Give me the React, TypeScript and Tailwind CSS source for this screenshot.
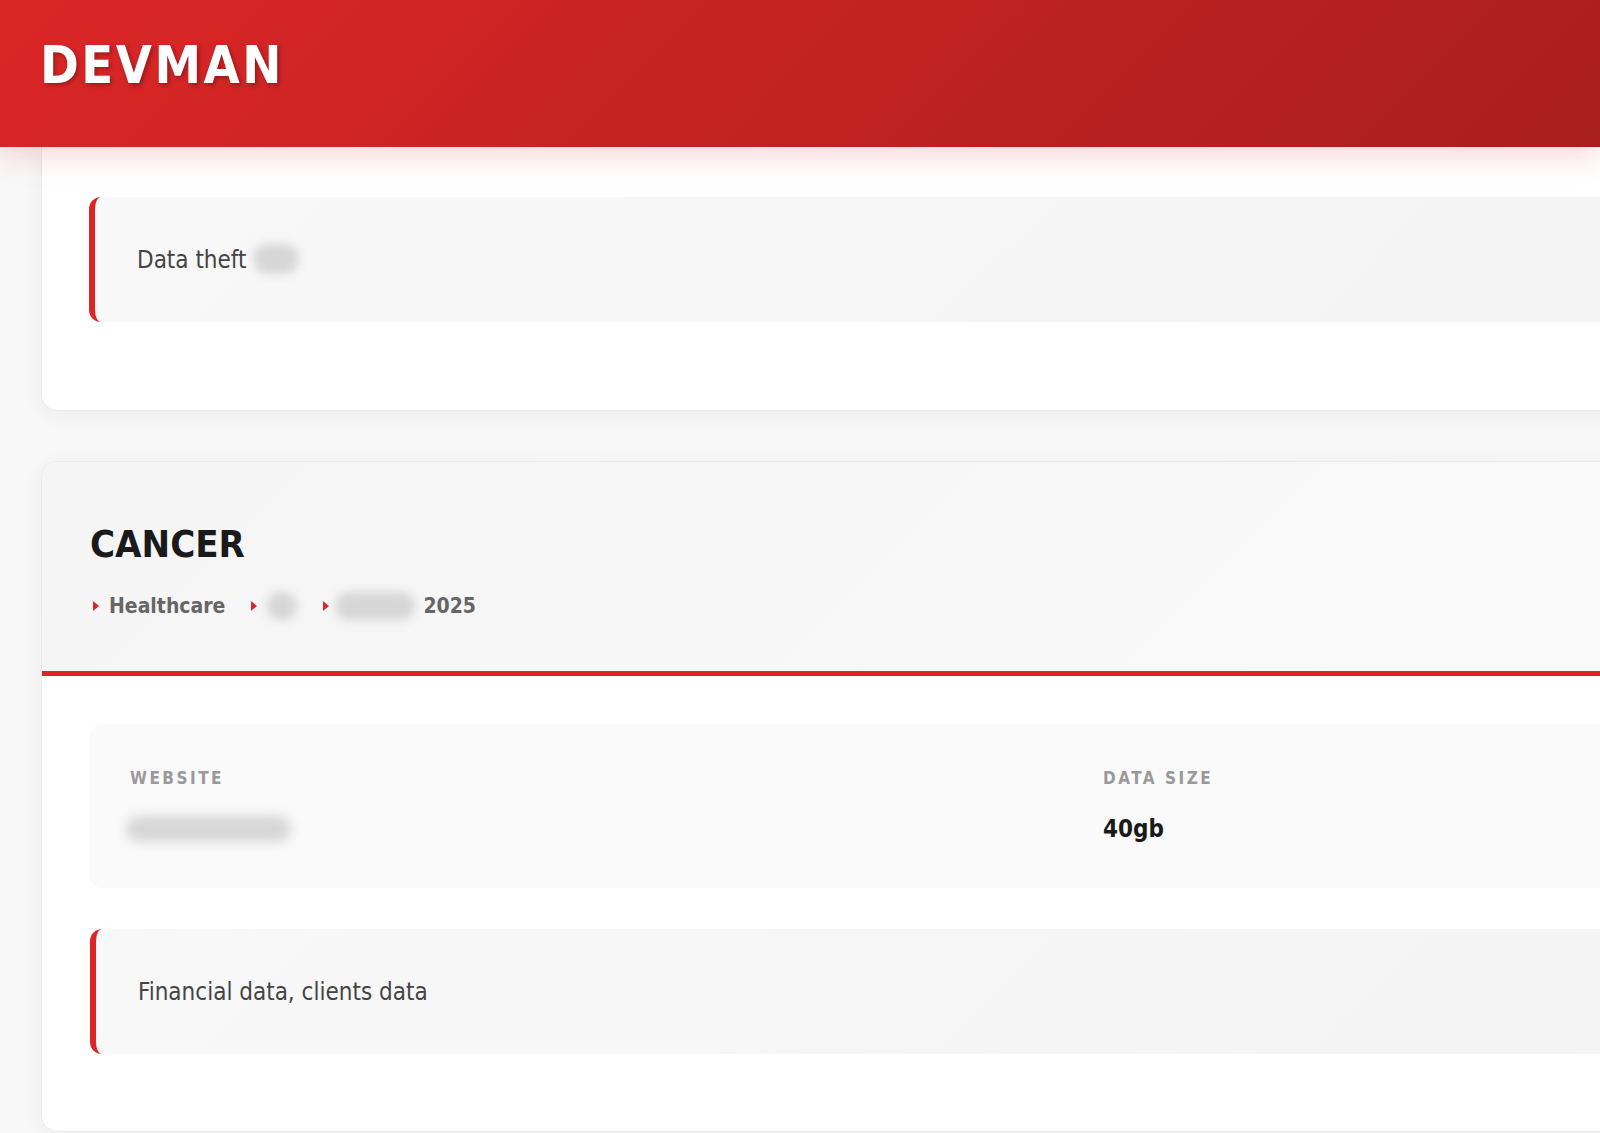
import React from 'react';

const font = { fontFamily: '"DejaVu Sans Condensed", "DejaVu Sans", Verdana, sans-serif' };

const Tri = () => (
    <span className="inline-block w-0 h-0 border-y-[5px] border-y-transparent border-l-[6px] border-l-[#dc2626] mr-[10px]" />
);

const Blur = ({ className }: { className: string }) => (
    <span className={`inline-block rounded-full bg-[#d6d6d6] blur-[5px] align-middle ${className}`} />
);

const Note = ({ children }: { children: React.ReactNode }) => (
    <div className="rounded-[12px] border-l-[6px] border-[#dc2626] bg-linear-135 from-[#f8f8f8] to-[#f3f3f3] pl-[42px] pt-[44px] pb-[43px] text-[24px] leading-[38px] text-[#444]">
        {children}
    </div>
);

export default function App() {
    return (
        <div className="w-[1600px] h-[1133px] overflow-hidden bg-[#f8f8f8] flex flex-col" style={font}>
            {/* Header */}
            <header className="relative z-10 h-[147px] shrink-0 bg-linear-135 from-[#dc2626] to-[#a91e1e] pl-[40px] pt-[39px] shadow-[0_6px_30px_rgba(220,38,38,0.22)]">
                <h1 className="text-[52px] leading-none font-bold tracking-[2.5px] text-white [text-shadow:2px_2px_4px_rgba(0,0,0,0.3)]">
                    DEVMAN
                </h1>
            </header>

            <main className="flex flex-col pl-[41px]">
                {/* Previous entry, scrolled up under the header */}
                <section className="w-[2092px] shrink-0 bg-white border border-t-0 border-[#ebebeb] rounded-b-[16px] shadow-[0_4px_20px_rgba(0,0,0,0.05)] pt-[50px] px-[47px] pb-[88px]">
                    <Note>
                        Data theft <Blur className="w-[46px] h-[30px] -mt-1" />
                    </Note>
                </section>

                {/* Entry */}
                <section className="mt-[50px] w-[2092px] shrink-0 bg-white border border-[#ebebeb] rounded-[16px] shadow-[0_4px_20px_rgba(0,0,0,0.05)]">
                    <div className="rounded-t-[16px] bg-linear-135 from-[#f5f5f5] to-[#fbfbfb] border-b-[5px] border-[#dc2626] pl-[48px] pt-[60px] pb-[49px]">
                        <h2 className="text-[38px] leading-[1.2] font-bold text-[#1a1a1a]">CANCER</h2>
                        <div className="mt-[23px] flex items-center gap-[26px] text-[21px] leading-[1.5] font-bold text-[#666]">
                            <span className="flex items-center pl-[3px]"><Tri />Healthcare</span>
                            <span className="flex items-center"><Tri /><Blur className="w-[30px] h-[28px]" /></span>
                            <span className="flex items-center"><Tri /><Blur className="w-[80px] h-[28px] -ml-[4px]" /><span className="ml-[8px]">2025</span></span>
                        </div>
                    </div>

                    <div className="px-[48px] pt-[48px] pb-[77px]">
                        <div className="rounded-[12px] bg-[#fafafa] grid grid-cols-[941px_941px] gap-x-[32px] px-[40px] pt-[42px] pb-[41px]">
                            <div>
                                <div className="text-[17px] leading-[1.5] font-bold uppercase tracking-[2.5px] text-[#999]">Website</div>
                                <div className="mt-[19px] h-[36px] flex items-center">
                                    <Blur className="w-[165px] h-[26px] -ml-[4px] blur-[6px]" />
                                </div>
                            </div>
                            <div>
                                <div className="text-[17px] leading-[1.5] font-bold uppercase tracking-[2.5px] text-[#999]">Data Size</div>
                                <div className="mt-[19px] text-[24px] leading-[1.5] font-bold text-[#1a1a1a]">40gb</div>
                            </div>
                        </div>

                        <div className="mt-[41px]">
                            <Note>Financial data, clients data</Note>
                        </div>
                    </div>
                </section>
            </main>
        </div>
    );
}
